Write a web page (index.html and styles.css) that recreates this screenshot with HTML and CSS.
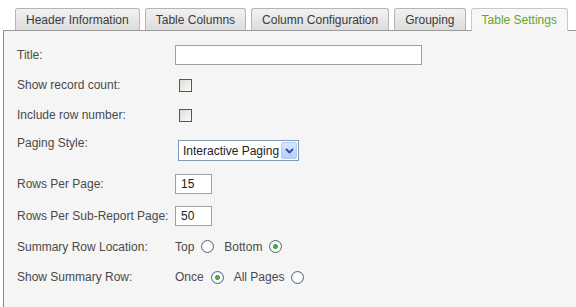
FILE: index.html
```html
<!DOCTYPE html>
<html lang="en">
<head>
    <meta charset="UTF-8">
    <meta name="viewport" content="width=device-width, initial-scale=1.0">
    <title>Table Settings</title>
    <link rel="stylesheet" href="styles.css">
</head>
<body>
    <div class="tabs">
        <div class="tab">Header Information</div>
        <div class="tab">Table Columns</div>
        <div class="tab">Column Configuration</div>
        <div class="tab">Grouping</div>
        <div class="tab active">Table Settings</div>
    </div>

    <div class="panel">
        <div class="form">
            <label class="label">Title:</label>
            <div class="field"><input type="text" class="text title-input"></div>

            <label class="label">Show record count:</label>
            <div class="field"><input type="checkbox" class="check"></div>

            <label class="label">Include row number:</label>
            <div class="field"><input type="checkbox" class="check"></div>

            <label class="label label-top">Paging Style:</label>
            <div class="field">
                <div class="select">
                    <span class="select-value">Interactive Paging</span>
                    <span class="select-btn">
                        <svg width="9" height="6" viewBox="0 0 9 6"><path d="M1 1 L4.5 4.5 L8 1" fill="none" stroke="#2a4d9a" stroke-width="1.8"/></svg>
                    </span>
                </div>
            </div>

            <label class="label">Rows Per Page:</label>
            <div class="field"><input type="text" class="text small-input" value="15"></div>

            <label class="label">Rows Per Sub-Report Page:</label>
            <div class="field"><input type="text" class="text small-input" value="50"></div>

            <label class="label">Summary Row Location:</label>
            <div class="field options">
                <span class="opt">Top</span><input type="radio" name="loc" class="radio">
                <span class="opt">Bottom</span><input type="radio" name="loc" class="radio" checked>
            </div>

            <label class="label">Show Summary Row:</label>
            <div class="field options">
                <span class="opt">Once</span><input type="radio" name="show" class="radio" checked>
                <span class="opt">All Pages</span><input type="radio" name="show" class="radio">
            </div>
        </div>
    </div>
</body>
</html>
```

FILE: styles.css
```css
html, body {
    height: 100%;
}

body {
    margin: 0;
    background: #fff;
    font-family: 'Liberation Sans', Arial, sans-serif;
    color: #444;
    display: flex;
    flex-direction: column;
    overflow: hidden;
}

.tabs {
    display: flex;
    gap: 5px;
    padding: 8px 0 0 15px;
    position: relative;
    z-index: 1;
}

.tab {
    flex-shrink: 0;
    white-space: nowrap;
    height: 22px;
    line-height: 22px;
    padding: 0 10px;
    font-size: 12px;
    color: #3a3a3a;
    background: linear-gradient(#f2f2f2, #dcdcdc);
    border: 1px solid #b4b4b4;
    border-bottom: none;
    border-radius: 3px 3px 0 0;
    box-sizing: border-box;
}

.tab.active {
    color: #66a32e;
    background: #f7f7f7;
    height: 23px;
    margin-bottom: -1px;
    border-color: #c8c8c8;
}

.panel {
    flex: 1;
    margin-left: 3px;
    background: #f5f5f5;
    border-top: 1px solid #9a9a9a;
    border-left: 1px solid #8a8a8a;
    padding: 9px 0 0 13px;
}

.form {
    display: grid;
    grid-template-columns: 158px 1fr;
    grid-template-rows: 30px 30px 30px 37px 33px 31px 31px 30px;
    font-size: 12px;
}

.label {
    align-self: center;
    white-space: nowrap;
    color: #4a4a4a;
}

.label-top {
    align-self: start;
    padding-top: 6px;
}

.field {
    display: flex;
    align-items: center;
    white-space: nowrap;
}

.text {
    height: 20px;
    border: 1px solid #a0a0a0;
    background: #fff;
    box-sizing: border-box;
    padding: 1px 5px 0;
    font-family: 'Liberation Sans', Arial, sans-serif;
    font-size: 12px;
    color: #222;
    margin: 0;
}

.title-input {
    width: 247px;
}

.small-input {
    width: 37px;
}

.check {
    appearance: none;
    width: 13px;
    height: 13px;
    margin: 0 0 0 4px;
    border: 1px solid #3f5a80;
    background: linear-gradient(135deg, #dcdcd6, #fbfbfb);
    box-sizing: border-box;
}

.select {
    display: flex;
    align-items: center;
    width: 121px;
    height: 21px;
    margin: 4px 0 0 3px;
    border: 1px solid #7f9db9;
    background: #fff;
    box-sizing: border-box;
    padding: 1px;
}

.select-value {
    flex: 1;
    font-size: 12px;
    color: #222;
    padding-left: 3px;
}

.select-btn {
    width: 16px;
    height: 17px;
    display: flex;
    align-items: center;
    justify-content: center;
    background: linear-gradient(#dbe5fb, #b9cdf6);
    border: 1px solid #b6c9ef;
    box-sizing: border-box;
    border-radius: 2px;
}

.options {
    font-size: 12px;
    color: #4a4a4a;
}

.opt {
    margin-right: 7px;
}

.radio {
    appearance: none;
    width: 13px;
    height: 13px;
    margin: 0 10px 0 0;
    border: 1px solid #4f6688;
    border-radius: 50%;
    background: radial-gradient(circle, #fff 40%, #e2e2dc);
    box-sizing: border-box;
}

.radio:checked {
    background: radial-gradient(circle, #3fb03f 0, #3fb03f 2.2px, #fff 2.6px, #fff 45%, #e2e2dc);
}
```
